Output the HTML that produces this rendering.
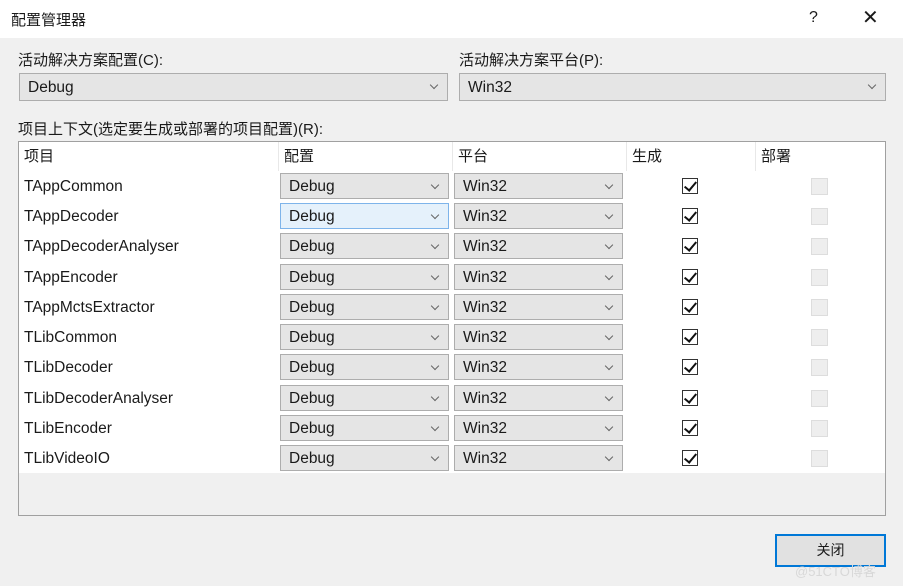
<!DOCTYPE html>
<html><head><meta charset="utf-8"><style>
*{margin:0;padding:0;box-sizing:border-box}
body{width:903px;height:586px;background:#f0f0f0;font-family:"Liberation Sans","Noto Sans CJK SC",sans-serif;font-size:15px;color:#1a1a1a;position:relative;overflow:hidden}
.a{position:absolute}
.title{left:0;top:0;width:903px;height:38px;background:#fff}
.combo{position:absolute;background:#e5e5e5;border:1px solid #adadad;padding-left:8px;line-height:25px;font-size:15.5px}
.combo:after{content:"";position:absolute;right:10px;top:8px;width:5px;height:5px;border-right:1px solid #666;border-bottom:1px solid #666;transform:rotate(45deg)}
.grid{left:18px;top:141px;width:868px;height:375px;border:1px solid #a0a0a0;background:#f0f0f0}
.row{position:absolute;left:0;width:866px;height:31px;background:#fff}
.name{position:absolute;left:5px;top:7px;font-size:15.5px}
.cb{position:absolute;left:663px;top:7px;width:16px;height:16px;border:1px solid #333;background:#fff}
.cb:after{content:"";position:absolute;left:4px;top:0px;width:5px;height:10px;border-right:2.5px solid #111;border-bottom:2.5px solid #111;transform:rotate(40deg)}
.db{position:absolute;left:792px;top:7px;width:17px;height:17px;border:1px solid #ddd;background:#eee}
.hd{position:absolute;top:0;height:29px;line-height:30px;padding-left:5px;background:#fff;border-right:1px solid #e8e8e8;font-size:15px}
</style></head><body>
<div class="a title"></div>
<div class="a" style="left:11px;top:9px;font-size:15px">配置管理器</div>
<div class="a" style="left:809px;top:9px;font-size:16px">?</div>
<div class="a" style="left:862px;top:5px;font-size:20px;font-weight:300">✕</div>
<div class="a" style="left:18px;top:49px">活动解决方案配置(C):</div>
<div class="a" style="left:459px;top:49px">活动解决方案平台(P):</div>
<div class="combo" style="left:19px;top:73px;width:429px;height:28px;line-height:27px">Debug</div>
<div class="combo" style="left:459px;top:73px;width:427px;height:28px;line-height:27px">Win32</div>
<div class="a" style="left:18px;top:118px">项目上下文(选定要生成或部署的项目配置)(R):</div>
<div class="a grid">
<div class="hd" style="left:0;width:260px">项目</div>
<div class="hd" style="left:260px;width:174px">配置</div>
<div class="hd" style="left:434px;width:174px">平台</div>
<div class="hd" style="left:608px;width:129px">生成</div>
<div class="hd" style="left:737px;width:129px;border-right:none">部署</div>
<div class="row" style="top:29px"><div class="name">TAppCommon</div><div class="combo" style="left:261px;top:2px;width:169px;height:26px">Debug</div><div class="combo" style="left:435px;top:2px;width:169px;height:26px">Win32</div><div class="cb"></div><div class="db"></div></div>
<div class="row" style="top:59px"><div class="name">TAppDecoder</div><div class="combo" style="left:261px;top:2px;width:169px;height:26px;background:#e5f1fb;border-color:#7eb4ea">Debug</div><div class="combo" style="left:435px;top:2px;width:169px;height:26px">Win32</div><div class="cb"></div><div class="db"></div></div>
<div class="row" style="top:89px"><div class="name">TAppDecoderAnalyser</div><div class="combo" style="left:261px;top:2px;width:169px;height:26px">Debug</div><div class="combo" style="left:435px;top:2px;width:169px;height:26px">Win32</div><div class="cb"></div><div class="db"></div></div>
<div class="row" style="top:119px;height:32px"><div class="name" style="top:8px">TAppEncoder</div><div class="combo" style="left:261px;top:3px;width:169px;height:26px">Debug</div><div class="combo" style="left:435px;top:3px;width:169px;height:26px">Win32</div><div class="cb" style="top:8px"></div><div class="db" style="top:8px"></div></div>
<div class="row" style="top:150px"><div class="name">TAppMctsExtractor</div><div class="combo" style="left:261px;top:2px;width:169px;height:26px">Debug</div><div class="combo" style="left:435px;top:2px;width:169px;height:26px">Win32</div><div class="cb"></div><div class="db"></div></div>
<div class="row" style="top:180px"><div class="name">TLibCommon</div><div class="combo" style="left:261px;top:2px;width:169px;height:26px">Debug</div><div class="combo" style="left:435px;top:2px;width:169px;height:26px">Win32</div><div class="cb"></div><div class="db"></div></div>
<div class="row" style="top:210px"><div class="name">TLibDecoder</div><div class="combo" style="left:261px;top:2px;width:169px;height:26px">Debug</div><div class="combo" style="left:435px;top:2px;width:169px;height:26px">Win32</div><div class="cb"></div><div class="db"></div></div>
<div class="row" style="top:240px;height:32px"><div class="name" style="top:8px">TLibDecoderAnalyser</div><div class="combo" style="left:261px;top:3px;width:169px;height:26px">Debug</div><div class="combo" style="left:435px;top:3px;width:169px;height:26px">Win32</div><div class="cb" style="top:8px"></div><div class="db" style="top:8px"></div></div>
<div class="row" style="top:271px"><div class="name">TLibEncoder</div><div class="combo" style="left:261px;top:2px;width:169px;height:26px">Debug</div><div class="combo" style="left:435px;top:2px;width:169px;height:26px">Win32</div><div class="cb"></div><div class="db"></div></div>
<div class="row" style="top:301px;height:30px"><div class="name">TLibVideoIO</div><div class="combo" style="left:261px;top:2px;width:169px;height:26px">Debug</div><div class="combo" style="left:435px;top:2px;width:169px;height:26px">Win32</div><div class="cb"></div><div class="db"></div></div>
</div>
<div class="a" style="left:775px;top:534px;width:111px;height:33px;border:2px solid #0078d7;background:#e1e1e1;text-align:center;line-height:29px;font-size:14px">关闭</div>
<div class="a" style="left:795px;top:561px;font-size:13px;color:#d8d8d8">@51CTO博客</div>
</body></html>
